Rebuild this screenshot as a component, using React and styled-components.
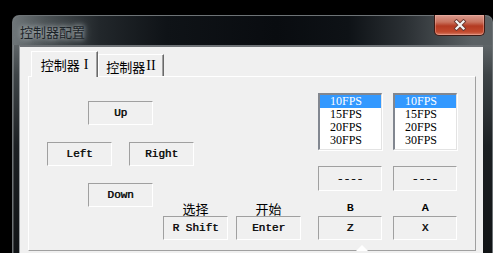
import React from "react";
import styled, { createGlobalStyle } from "styled-components";

const GlobalStyle = createGlobalStyle`
  * {
    box-sizing: border-box;
    margin: 0;
    padding: 0;
  }
  body {
    background: #000;
    overflow: hidden;
  }
`;

const mono = `"Liberation Mono", "DejaVu Sans Mono", monospace`;
const cjk = `"Noto Sans CJK SC", "Noto Sans", sans-serif`;

const Screen = styled.div`
  width: 493px;
  height: 253px;
  background: #000;
  padding: 15px 0 0 12px;
  overflow: hidden;
`;

const Window = styled.div`
  width: 481px;
  height: 238px;
  display: flex;
  flex-direction: column;
  border-radius: 7px 7px 0 0;
  border: 1px solid #6d7376;
  border-bottom: none;
  background: linear-gradient(180deg, #7d8386 0%, #3e4447 25%, #1c2023 55%, #111416 100%);
  box-shadow: inset 1px 1px 0 rgba(255, 255, 255, 0.2);
`;

const TitleBar = styled.div`
  height: 29px;
  flex: none;
  display: flex;
  justify-content: space-between;
  align-items: flex-start;
  padding: 0 7px 0 7px;
  border-radius: 6px 6px 0 0;
  background: linear-gradient(
    90deg,
    #6f7679 0%,
    #4a5154 7%,
    #22272b 18%,
    #0f1317 32%,
    #090c10 55%,
    #0e1216 70%,
    #2b3034 82%,
    #5b6164 96%
  );
`;

const Title = styled.span`
  margin-top: 8px;
  font-family: ${cjk};
  font-size: 13px;
  line-height: 15px;
  color: #1c2328;
  text-shadow: 0 0 5px rgba(200, 208, 210, 0.9), 0 0 9px rgba(170, 178, 182, 0.8);
`;

const CloseButton = styled.div`
  width: 51px;
  height: 21px;
  margin-top: -1px;
  display: flex;
  align-items: center;
  justify-content: center;
  border: 1px solid #3e1a14;
  border-top: none;
  border-radius: 0 0 5px 5px;
  background: linear-gradient(180deg, #d99a8e 0%, #c9735f 35%, #b33a22 55%, #c24a2e 85%, #d7806a 100%);
  box-shadow: inset 0 0 0 1px rgba(255, 200, 190, 0.35);
`;

const Client = styled.div`
  flex: 1;
  margin: 0 9px 0 6px;
  padding: 4px 0 0 8px;
  background: #f0f0f0;
  border-top: 2px solid #6e7276;
  border-left: 1px solid #9a9ea1;
  position: relative;
`;

const TabRow = styled.div`
  height: 25px;
  display: flex;
  align-items: flex-end;
  padding-left: 3px;
  position: relative;
  z-index: 1;
`;

const Tab = styled.div`
  width: ${({ w }) => w}px;
  height: ${({ active }) => (active ? 26 : 22)}px;
  margin-bottom: ${({ active }) => (active ? -1 : 0)}px;
  display: flex;
  align-items: center;
  justify-content: center;
  background: #f0f0f0;
  border-top: 1px solid #fff;
  border-left: 1px solid #fff;
  border-right: 1px solid #696969;
  box-shadow: inset -1px 0 0 #a0a0a0;
  font-family: ${cjk};
  font-size: 13px;
  color: #000;
  padding-top: ${({ active }) => (active ? 0 : 1)}px;
`;

const Roman = styled.span`
  font-family: "Liberation Serif", serif;
  font-size: 14px;
  margin-left: ${({ gap }) => gap}px;
`;

const Panel = styled.div`
  width: 448px;
  height: 175px;
  border-top: 1px solid #fff;
  border-left: 1px solid #fff;
  border-right: 1px solid #a0a0a0;
  border-bottom: 1px solid #a0a0a0;
  padding: 16px 0 0 18px;
  display: grid;
  grid-template-columns: 116px 31px 107px 17px 64px 11px 64px;
  grid-template-rows: 107px 40px;
`;

const DPad = styled.div`
  grid-column: 1 / 3;
  grid-row: 1 / 3;
  align-self: start;
  margin-top: 8px;
  display: flex;
  flex-direction: column;
  align-items: center;
  gap: 17px;
`;

const PadRow = styled.div`
  display: flex;
  gap: 17px;
`;

const Box = styled.div`
  width: ${({ w }) => w || 65}px;
  height: ${({ h }) => h || 24}px;
  flex: none;
  display: flex;
  align-items: center;
  justify-content: center;
  border-top: 1px solid #a0a0a0;
  border-left: 1px solid #a0a0a0;
  border-right: 1px solid #fff;
  border-bottom: 1px solid #fff;
  font-family: ${mono};
  font-size: 11px;
  color: #111;
  text-shadow: 0.5px 0 0 #111;
  white-space: pre;
`;

const KeyGroup = styled.div`
  grid-column: 2 / 4;
  grid-row: 2;
  display: flex;
  gap: 8px;
`;

const KeyCol = styled.div`
  grid-column: ${({ col }) => col || "auto"};
  grid-row: ${({ col }) => (col ? "1 / 3" : "auto")};
  display: flex;
  flex-direction: column;
  align-items: stretch;
`;

const Label = styled.div`
  height: 16px;
  display: flex;
  align-items: center;
  justify-content: center;
  font-family: ${({ latin }) => (latin ? mono : cjk)};
  font-size: ${({ latin }) => (latin ? 11 : 13)}px;
  text-shadow: ${({ latin }) => (latin ? "0.5px 0 0 #000" : "none")};
  color: #000;
  margin-top: ${({ mt }) => mt || 0}px;
`;

const ListBox = styled.div`
  width: 64px;
  height: 57px;
  background: #fff;
  border-top: 2px solid #828790;
  border-left: 2px solid #828790;
  border-right: 1px solid #e3e3e3;
  border-bottom: 1px solid #e3e3e3;
  box-shadow: 1px 1px 0 #fff;
  margin-bottom: 16px;
`;

const ListItem = styled.div`
  height: 13px;
  line-height: 13px;
  padding-left: 10px;
  font-family: "Liberation Serif", serif;
  font-size: 12px;
  color: ${({ selected }) => (selected ? "#fff" : "#000")};
  background: ${({ selected }) => (selected ? "#3399ff" : "transparent")};
`;

const Pointer = styled.div`
  position: absolute;
  left: 336px;
  bottom: 2px;
  width: 0;
  height: 0;
  border-left: 6px solid transparent;
  border-right: 6px solid transparent;
  border-bottom: 6px solid #fff;
`;

const fpsList = ["10FPS", "15FPS", "20FPS", "30FPS"];

function FpsList() {
  return (
    <ListBox>
      {fpsList.map((f, i) => (
        <ListItem key={f} selected={i === 0}>
          {f}
        </ListItem>
      ))}
    </ListBox>
  );
}

function CloseIcon() {
  return (
    <svg width="14" height="12" viewBox="0 0 14 12">
      <path d="M3.5 2.5 L10.5 9.5 M10.5 2.5 L3.5 9.5" stroke="#6b3a32" strokeWidth="4" strokeLinecap="square" />
      <path d="M3.5 2.5 L10.5 9.5 M10.5 2.5 L3.5 9.5" stroke="#f4f4f4" strokeWidth="2.2" strokeLinecap="square" />
    </svg>
  );
}

export default function App() {
  return (
    <>
      <GlobalStyle />
      <Screen>
        <Window>
          <TitleBar>
            <Title>控制器配置</Title>
            <CloseButton>
              <CloseIcon />
            </CloseButton>
          </TitleBar>
          <Client>
            <TabRow>
              <Tab active w={67}>
                控制器<Roman gap={4}>I</Roman>
              </Tab>
              <Tab w={66}>
                控制器<Roman gap={1}>II</Roman>
              </Tab>
            </TabRow>
            <Panel>
              <DPad>
                <Box>Up</Box>
                <PadRow>
                  <Box>Left</Box>
                  <Box>Right</Box>
                </PadRow>
                <Box>Down</Box>
              </DPad>
              <KeyGroup>
                <KeyCol>
                  <Label>选择</Label>
                  <Box>R Shift</Box>
                </KeyCol>
                <KeyCol>
                  <Label>开始</Label>
                  <Box>Enter</Box>
                </KeyCol>
              </KeyGroup>
              <KeyCol col={5}>
                <FpsList />
                <Box w={64} h={25}>----</Box>
                <Label latin mt={9}>B</Label>
                <Box w={64}>Z</Box>
              </KeyCol>
              <KeyCol col={7}>
                <FpsList />
                <Box w={64} h={25}>----</Box>
                <Label latin mt={9}>A</Label>
                <Box w={64}>X</Box>
              </KeyCol>
            </Panel>
            <Pointer />
          </Client>
        </Window>
      </Screen>
    </>
  );
}
